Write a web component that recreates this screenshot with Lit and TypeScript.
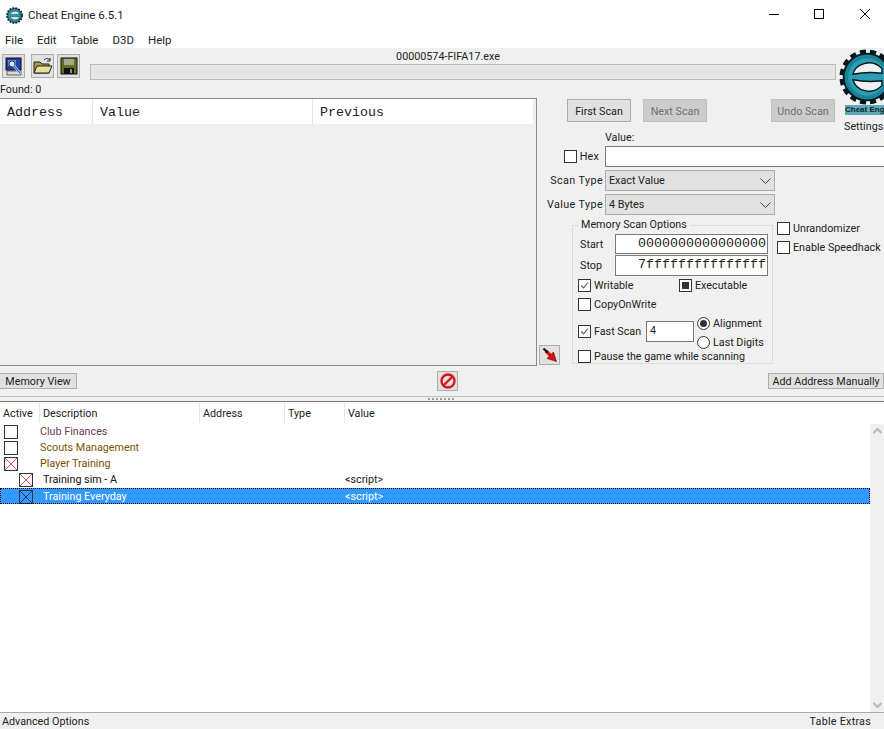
import { LitElement, html, css, svg } from "lit";
import { customElement } from "lit/decorators.js";

const check = svg`<svg class="mark" viewBox="0 0 13 13"><path d="M2.5 6.5l3 3 5-6.5" fill="none" stroke="#555" stroke-width="1.3"/></svg>`;
const cross = (c: string) => svg`<svg class="mark" viewBox="0 0 14 14"><path d="M0 0L14 14M14 0L0 14" fill="none" stroke="${c}" stroke-width="1"/></svg>`;

const logo = (cls: string) => svg`<svg class="${cls}" viewBox="0 0 60 60">
  <circle cx="30" cy="30" r="25" fill="none" stroke="#04181d" stroke-width="9" stroke-dasharray="6 4"/>
  <circle cx="30" cy="30" r="25" fill="#1b8397" stroke="#04181d" stroke-width="2"/>
  <circle cx="30" cy="30" r="20" fill="#2b9db3"/>
  <path d="M15 27C18 15 36 10 46 21L46 26Q30 24 15 27Z" fill="#f0f0f0" stroke="#04181d" stroke-width="1.5"/>
  <path d="M15 33C18 45 36 50 46 39L46 34Q30 36 15 33Z" fill="#f0f0f0" stroke="#04181d" stroke-width="1.5"/>
</svg>`;

const rows = [
  { name: "Club Finances", color: "#6a3d5c", child: false, mark: "" },
  { name: "Scouts Management", color: "#7a5500", child: false, mark: "" },
  { name: "Player Training", color: "#7a4c00", child: false, mark: "x" },
  { name: "Training sim - A", color: "#111", child: true, mark: "x", value: "<script>" },
  { name: "Training Everyday", color: "#fff", child: true, mark: "x", value: "<script>", selected: true },
];

@customElement("app-root")
export class AppRoot extends LitElement {
  static styles = css`
    :host { display: block; width: 884px; height: 729px; overflow: hidden; background: #fff; position: relative;
      font: 10.75px Roboto, "Liberation Sans", sans-serif; color: #222; }
    * { box-sizing: border-box; }
    .titlebar { height: 30px; display: flex; align-items: center; padding-left: 6px; }
    .title-icon { width: 17px; height: 17px; }
    .title-text { margin-left: 5px; font-size: 11.5px; }
    .win { margin-left: auto; display: flex; }
    .win svg { width: 46px; height: 30px; display: block; }
    .menubar { height: 18px; display: flex; padding: 2px 0 0 5px; gap: 14px; align-items: center; font-size: 11.5px; }
    .form { background: #f0f0f0; height: 681px; display: flex; flex-direction: column; }
    .top { height: 50px; position: relative; flex: none; }
    .tools { display: flex; padding: 6px 0 0 2px; }
    .tool { width: 23px; height: 24px; background: #e1e1e1; border: 1px solid #adadad; display: flex; align-items: center; justify-content: center; margin-right: 3px; }
    .tool:nth-child(1) { margin-right: 6px; }
    .tool svg { width: 20px; height: 20px; }
    .found { margin-top: 5px; line-height: 14px; }
    .proc { position: absolute; left: 90px; top: 2px; width: 716px; text-align: center; line-height: 14px; }
    .progress { position: absolute; left: 90px; top: 16px; width: 746px; height: 16px; background: #e6e6e6; border: 1px solid #bcbcbc; }
    .brand { position: absolute; left: 839px; top: 0; width: 60px; z-index: 2; }
    .brand svg { width: 56px; height: 56px; display: block; margin-top: 1px; }
    .brand-name { font: bold 8px/10px "Liberation Sans", sans-serif; color: #052a33; margin: 0 0 0 6px; white-space: nowrap; background: #1b8397aa; }
    .settings { margin: 5px 0 0 5px; line-height: 14px; }
    .middle { height: 268px; display: flex; flex: none; }
    .list { width: 537px; border-top: 1px solid #8c8c8c; border-right: 1px solid #8c8c8c; border-bottom: 1px solid #8c8c8c; flex: none; }
    .list-head { height: 25px; margin-right: 3px; background: #fff; display: flex; font: 13.33px "Liberation Mono", monospace; }
    .list-head div { padding: 6px 0 0 7px; border-right: 1px solid #e5e5e5; color: #222; }
    .right { width: 347px; overflow: hidden; display: flex; flex-direction: column; flex: none; }
    .scanbtns { display: flex; padding: 1px 0 0 30px; height: 24px; flex: none; }
    .btn { width: 64px; height: 23px; border: 1px solid #adadad; background: #e1e1e1; display: flex; align-items: center; justify-content: center; flex: none; padding-top: 1px; }
    .btn.off { background: #cccccc; color: #6f6f6f; border-color: #bfbfbf; }
    .next { margin-left: 12px; }
    .undo { margin-left: 64px; }
    .value-label { margin: 9px 0 0 68px; line-height: 14px; height: 15px; flex: none; }
    .field { display: grid; grid-template-columns: 68px 300px; height: 21px; margin-bottom: 3px; align-items: center; flex: none; }
    .field label { text-align: right; padding-right: 2px; white-space: nowrap; letter-spacing: 0.4px; }
    .hex { display: flex; align-items: center; justify-content: flex-end; gap: 3px; padding-right: 6px; letter-spacing: 0.2px; }
    .text { background: #fff; border: 1px solid #7a7a7a; height: 21px; }
    .select { width: 170px; height: 21px; background: #e1e1e1; border: 1px solid #adadad; display: flex; align-items: center; padding-left: 3px; justify-content: space-between; }
    .select svg { width: 11px; height: 6px; margin-right: 3px; }
    .lower { display: flex; flex: 1; min-height: 0; }
    .pointer-col { width: 35px; display: flex; align-items: flex-end; padding: 0 0 1px 2px; flex: none; }
    .icon-btn { width: 21px; height: 20px; background: #e1e1e1; border: 1px solid #adadad; display: flex; align-items: center; justify-content: center; }
    .icon-btn svg { width: 18px; height: 18px; }
    fieldset { width: 201px; height: 146px; margin: 0; padding: 0 5px; border: 1px solid #dcdcdc; background: #f0f0f0; flex: none; min-width: 0; }
    legend { padding: 0 3px; margin-left: 0; line-height: 14px; height: 14px; }
    .range { display: grid; grid-template-columns: 35px 153px; margin-top: 2px; height: 20px; align-items: center; margin-left: 2px; }
    .range + .range { height: 21px; margin-top: 1px; }
    .range .input { height: 100%; background: #fff; border: 1px solid #7a7a7a; text-align: right; padding-right: 1px; font: 13.33px/18px "Liberation Mono", monospace; color: #222; }
    .line { display: flex; align-items: center; gap: 3px; height: 14px; white-space: nowrap; }
    .cb { width: 13px; height: 13px; border: 1px solid #333; background: #fff; display: inline-flex; align-items: center; justify-content: center; flex: none; }
    .mark { width: 100%; height: 100%; display: block; }
    .square { width: 7px; height: 7px; background: #333; }
    .perms { display: grid; grid-template-columns: 101px auto; margin-top: 2px; row-gap: 5px; }
    .fast { display: flex; align-items: center; margin-top: 5px; }
    .fast > .line { width: 65px; flex: none; }
    .fast .input4 { width: 48px; height: 21px; background: #fff; border: 1px solid #7a7a7a; padding-left: 3px; line-height: 18px; margin: 0 3px; flex: none; }
    .radios { display: flex; flex-direction: column; gap: 5px; margin-bottom: -2px; }
    .radio { width: 13px; height: 13px; border-radius: 50%; border: 1px solid #333; background: #fff; display: inline-flex; align-items: center; justify-content: center; flex: none; }
    .radio i { width: 7px; height: 7px; border-radius: 50%; background: #333; }
    .pause { margin-top: 2px; }
    .extras { margin: 3px 0 0 4px; display: flex; flex-direction: column; gap: 5px; }
    .actions { height: 30px; display: flex; align-items: center; position: relative; flex: none; }
    .small-btn { height: 16px; border: 1px solid #adadad; background: #e1e1e1; display: flex; align-items: center; justify-content: center; white-space: nowrap; flex: none; }
    .mem { width: 78px; margin-left: -1px; }
    .stop { margin-left: 360px; flex: none; }
    .add { width: 116px; margin-left: auto; }
    .splitter { height: 6px; border-top: 1px solid #c0c0c0; border-bottom: 1px solid #7d7d7d; display: flex; justify-content: center; align-items: center; flex: none; }
    .dots { width: 28px; height: 2px; background: repeating-linear-gradient(90deg, #a0a0a0 0 2px, transparent 2px 4px); }
    .table { flex: 1; min-height: 0; background: #fff; display: flex; position: relative; }
    .tbody { flex: 1; min-width: 0; }
    .thead { height: 21px; padding-top: 1px; display: flex; align-items: center; }
    .thead div { height: 100%; display: flex; align-items: center; padding-left: 3px; border-right: 1px solid #e5e5e5; }
    .tr { height: 16px; display: grid; grid-template-columns: 345px auto; align-items: center; position: relative; }
    .tr .d { display: flex; align-items: center; padding-left: 4px; white-space: nowrap; }
    .tr.child .d { padding-left: 19px; }
    .tr .cb { width: 14px; height: 14px; margin: 2px 22px 0 0; flex: none; }
    .tr.child .cb { margin-right: 10px; }
    .tr.sel { background: #3399ff; color: #fff; outline: 1px dotted #000; outline-offset: -1px; margin-top: 1px; margin-bottom: -1px; }
    .tr.sel .cb { background: #3399ff; margin-top: 1px; }
    .scroll { width: 14px; background: #f0f0f0; margin-top: 22px; display: flex; flex-direction: column; justify-content: space-between; align-items: center; padding: 4px 0; flex: none; }
    .scroll svg { width: 9px; height: 6px; display: block; }
    .status { height: 17px; flex: none; border-top: 1px solid #a8a8a8; display: flex; justify-content: space-between; align-items: center; padding: 0 13px 0 2px; }
    .status span + span { letter-spacing: 0.25px; }
  `;

  render() {
    return html`
      <div class="titlebar">
        ${logo("title-icon")}
        <span class="title-text">Cheat Engine 6.5.1</span>
        <div class="win">
          <svg viewBox="0 0 46 30"><path d="M23 14.5H33" stroke="#000"/></svg>
          <svg viewBox="0 0 46 30"><rect x="22.5" y="9.5" width="9" height="9" fill="none" stroke="#000"/></svg>
          <svg viewBox="0 0 46 30"><path d="M22 9L32 19M32 9L22 19" stroke="#000" fill="none"/></svg>
        </div>
      </div>
      <div class="menubar"><span>File</span><span>Edit</span><span>Table</span><span>D3D</span><span>Help</span></div>
      <div class="form">
        <div class="top">
          <div class="tools">
            <div class="tool"><svg viewBox="0 0 20 20">
              <rect x="2" y="2" width="15" height="12" fill="#1f3fa8" stroke="#111"/>
              <rect x="4" y="4" width="8" height="6" fill="#5c8fe0"/>
              <path d="M3 15h14v4H3z" fill="#d8d8d8" stroke="#333" stroke-width=".7"/>
              <circle cx="8" cy="8" r="3" fill="#dfe9f5" stroke="#333"/>
              <path d="M10 10l6 7" stroke="#fff" stroke-width="2.4"/>
              <path d="M10 10l6 7" stroke="#2a5fd0" stroke-width="1.2"/>
            </svg></div>
            <div class="tool"><svg viewBox="0 0 20 20">
              <path d="M1 6h6l2 2h7v9H1z" fill="#a89a3a" stroke="#222"/>
              <path d="M4 10h15l-3 7H1z" fill="#e8e098" stroke="#222"/>
              <path d="M11 4c2-2 4-2 6 0M17 2v3h-3" fill="none" stroke="#222"/>
            </svg></div>
            <div class="tool"><svg viewBox="0 0 20 20">
              <rect x="2" y="2" width="16" height="16" fill="#6b6b1f" stroke="#111"/>
              <rect x="5" y="3" width="10" height="6" fill="#a8a88a"/>
              <rect x="5" y="12" width="10" height="6" fill="#111"/>
              <rect x="11" y="13" width="2" height="4" fill="#888"/>
            </svg></div>
          </div>
          <div class="found">Found: 0</div>
          <div class="proc">00000574-FIFA17.exe</div>
          <div class="progress"></div>
          <div class="brand">
            ${logo("")}
            <div class="brand-name">Cheat Engine</div>
            <div class="settings">Settings</div>
          </div>
        </div>
        <div class="middle">
          <div class="list">
            <div class="list-head">
              <div style="width:93px">Address</div>
              <div style="width:220px">Value</div>
              <div style="flex:1;border:0">Previous</div>
            </div>
          </div>
          <div class="right">
            <div class="scanbtns">
              <div class="btn">First Scan</div>
              <div class="btn off next">Next Scan</div>
              <div class="btn off undo">Undo Scan</div>
            </div>
            <div class="value-label">Value:</div>
            <div class="field">
              <div class="hex"><span class="cb"></span>Hex</div>
              <div class="text"></div>
            </div>
            <div class="field">
              <label>Scan Type</label>
              <div class="select">Exact Value<svg viewBox="0 0 11 6"><path d="M.5.5L5.5 5.5 10.5.5" fill="none" stroke="#444"/></svg></div>
            </div>
            <div class="field">
              <label>Value Type</label>
              <div class="select">4 Bytes<svg viewBox="0 0 11 6"><path d="M.5.5L5.5 5.5 10.5.5" fill="none" stroke="#444"/></svg></div>
            </div>
            <div class="lower">
              <div class="pointer-col"><div class="icon-btn"><svg viewBox="0 0 18 18">
                <path d="M5 5L10 10" stroke="#d81010" stroke-width="3.4"/>
                <path d="M6 12.5L12.5 6 15.5 15.5z" fill="#d81010" stroke="#600" stroke-width=".6"/>
                <path d="M2.5 2.5L6.5 6.5" stroke="#111" stroke-width="2.2"/>
              </svg></div></div>
              <fieldset>
                <legend>Memory Scan Options</legend>
                <div class="range"><span>Start</span><div class="input">0000000000000000</div></div>
                <div class="range"><span>Stop</span><div class="input">7fffffffffffffff</div></div>
                <div class="perms">
                  <div class="line"><span class="cb">${check}</span>Writable</div>
                  <div class="line"><span class="cb"><i class="square"></i></span>Executable</div>
                  <div class="line"><span class="cb"></span>CopyOnWrite</div>
                </div>
                <div class="fast">
                  <div class="line"><span class="cb">${check}</span>Fast Scan</div>
                  <div class="input4">4</div>
                  <div class="radios">
                    <div class="line"><span class="radio"><i></i></span>Alignment</div>
                    <div class="line"><span class="radio"></span>Last Digits</div>
                  </div>
                </div>
                <div class="line pause"><span class="cb"></span>Pause the game while scanning</div>
              </fieldset>
              <div class="extras">
                <div class="line"><span class="cb"></span>Unrandomizer</div>
                <div class="line"><span class="cb"></span>Enable Speedhack</div>
              </div>
            </div>
          </div>
        </div>
        <div class="actions">
          <div class="small-btn mem">Memory View</div>
          <div class="icon-btn stop"><svg viewBox="0 0 18 18">
            <circle cx="9" cy="9" r="6.5" fill="none" stroke="#d81818" stroke-width="2.4"/>
            <path d="M4.5 13.5L13.5 4.5" stroke="#d81818" stroke-width="2.4"/>
          </svg></div>
          <div class="small-btn add">Add Address Manually</div>
        </div>
        <div class="splitter"><div class="dots"></div></div>
        <div class="table">
          <div class="tbody">
            <div class="thead">
              <div style="width:40px">Active</div>
              <div style="width:160px">Description</div>
              <div style="width:85px">Address</div>
              <div style="width:60px">Type</div>
              <div style="border:0">Value</div>
            </div>
            ${rows.map((r) => html`
              <div class="tr ${r.child ? "child" : ""} ${r.selected ? "sel" : ""}">
                <div class="d" style="color:${r.color}">
                  <span class="cb">${r.mark ? cross(r.selected ? "#10204a" : "#d03030") : ""}</span>${r.name}
                </div>
                <div>${r.value ?? ""}</div>
              </div>`)}
          </div>
          <div class="scroll">
            <svg viewBox="0 0 9 6"><path d="M.5 5L4.5 1 8.5 5" fill="none" stroke="#b8b8b8" stroke-width="2"/></svg>
            <svg viewBox="0 0 9 6"><path d="M.5 1L4.5 5 8.5 1" fill="none" stroke="#b8b8b8" stroke-width="2"/></svg>
          </div>
        </div>
        <div class="status"><span>Advanced Options</span><span>Table Extras</span></div>
      </div>
    `;
  }
}
